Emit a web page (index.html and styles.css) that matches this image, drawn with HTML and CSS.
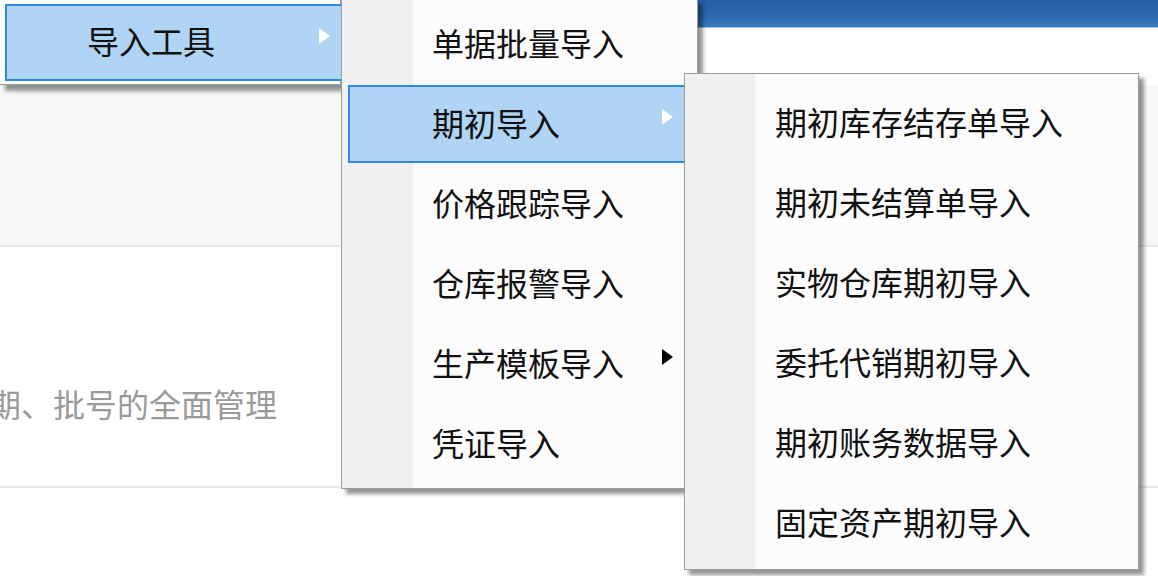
FILE: index.html
```html
<!DOCTYPE html>
<html lang="zh-CN">
<head>
<meta charset="utf-8">
<title>导入工具</title>
<link rel="stylesheet" href="styles.css">
</head>
<body>
<div class="page">
  <div class="topbar"></div>
  <div class="strip"></div>
  <div class="band"></div>
  <div class="section">
    <p class="desc">期、批号的全面管理</p>
  </div>
</div>

<div class="menu menu-main">
  <div class="item active"><span class="label">导入工具</span><span class="arrow white"></span></div>
</div>

<div class="menu menu-sub">
  <div class="item"><span class="label">单据批量导入</span></div>
  <div class="item active"><span class="label">期初导入</span><span class="arrow white"></span></div>
  <div class="item"><span class="label">价格跟踪导入</span></div>
  <div class="item"><span class="label">仓库报警导入</span></div>
  <div class="item"><span class="label">生产模板导入</span><span class="arrow"></span></div>
  <div class="item"><span class="label">凭证导入</span></div>
</div>

<div class="menu menu-sub2">
  <div class="item"><span class="label">期初库存结存单导入</span></div>
  <div class="item"><span class="label">期初未结算单导入</span></div>
  <div class="item"><span class="label">实物仓库期初导入</span></div>
  <div class="item"><span class="label">委托代销期初导入</span></div>
  <div class="item"><span class="label">期初账务数据导入</span></div>
  <div class="item"><span class="label">固定资产期初导入</span></div>
</div>
</body>
</html>
```

FILE: styles.css
```css
html, body {
  margin: 0;
  padding: 0;
}
body {
  width: 1158px;
  height: 576px;
  overflow: hidden;
  position: relative;
  background: #ffffff;
  font-family: "Noto Sans CJK SC", "Microsoft YaHei", sans-serif;
}
.page {
  display: flex;
  flex-direction: column;
}
.topbar {
  height: 27px;
  background: linear-gradient(to bottom, #235ea6 0%, #2e6cb2 70%, #3a7bc0 100%);
  border-bottom: 1px solid #9fc1e4;
}
.strip {
  height: 57px;
  background: #ffffff;
}
.band {
  height: 160px;
  background: #f7f7f7;
  border-bottom: 2px solid #e8e8e8;
}
.section {
  height: 239px;
  background: #ffffff;
  border-bottom: 2px solid #ebebeb;
}
.desc {
  margin: 0 0 0 -11px;
  padding-top: 136px;
  font-size: 32px;
  line-height: 40px;
  color: #9a9a9a;
  white-space: nowrap;
}

/* context menus */
.menu {
  position: absolute;
  box-sizing: border-box;
  border: 1px solid #9c9c9c;
  box-shadow: 5px 5px 4px rgba(0, 0, 0, 0.42);
  display: flex;
  flex-direction: column;
  gap: 2px;
}
.item {
  box-sizing: border-box;
  height: 78px;
  margin: 0 6px;
  border: 2px solid transparent;
  display: flex;
  align-items: center;
  padding-left: 82px;
  font-size: 32px;
  color: #111111;
  white-space: nowrap;
}
.item.active {
  background: #b0d4f3;
  border-color: #2f87de;
}
.label {
  line-height: 40px;
  margin-bottom: 5px;
}
.arrow {
  margin-left: auto;
  margin-right: 16px;
  margin-bottom: 14px;
  width: 0;
  height: 0;
  border-top: 8px solid transparent;
  border-bottom: 8px solid transparent;
  border-left: 11px solid #000000;
}
.arrow.white {
  border-left-color: #ffffff;
}

.menu-main {
  left: -1px;
  top: -1px;
  width: 342px;
  height: 86px;
  padding: 4px 0 0 0;
  background: #ffffff;
  box-shadow: 6px 6px 4px rgba(0, 0, 0, 0.42);
}
.menu-main .item {
  margin: 0 -6px 0 5px;
  height: 77px;
  padding-left: 80px;
}
.menu-main .arrow {
  margin-right: 14px;
}

.menu-sub {
  left: 341px;
  top: -1px;
  width: 357px;
  height: 490px;
  padding-top: 5px;
  background: linear-gradient(to right, #f0f0f0 0, #f0f0f0 71px, #fcfcfc 71px);
}

.menu-sub2 {
  left: 684px;
  top: 73px;
  width: 455px;
  height: 497px;
  padding-top: 10px;
  background: linear-gradient(to right, #f0f0f0 0, #f0f0f0 70px, #fcfcfc 70px);
}
```
